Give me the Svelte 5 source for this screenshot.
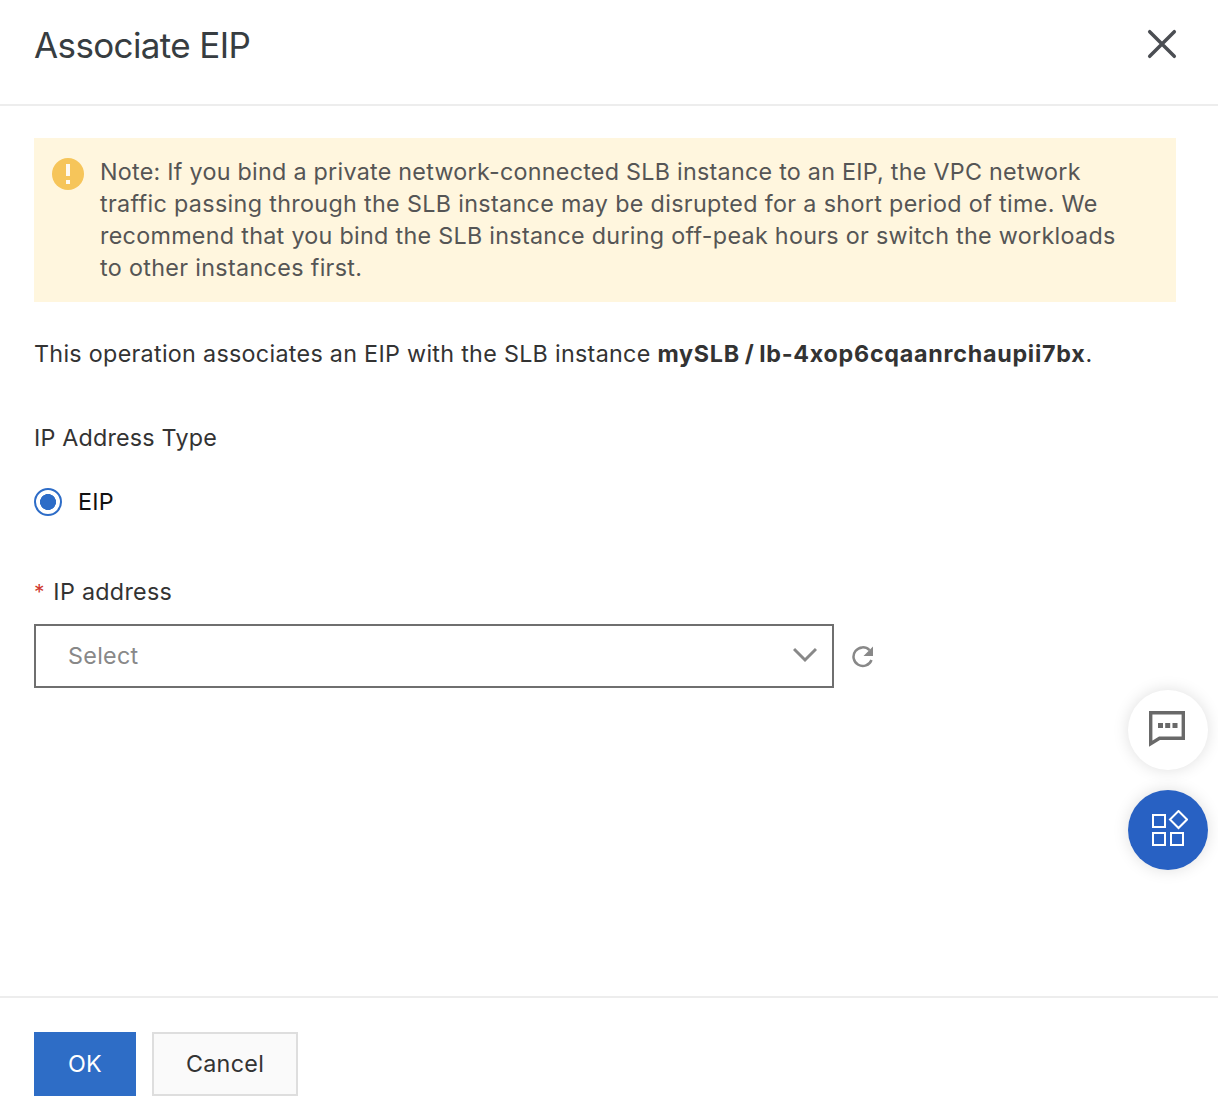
<script>
  let addressType = $state('eip');
</script>

<div class="panel">
  <header>
    <h1>Associate EIP</h1>
    <button class="close" aria-label="Close">
      <svg width="30" height="30" viewBox="0 0 30 30"><path d="M2.700 2.700L27.300 27.300M27.300 2.700L2.700 27.300" /></svg>
    </button>
  </header>

  <main>
    <div class="notice">
      <svg width="32" height="32" viewBox="0 0 32 32">
        <circle cx="16" cy="16" r="16" fill="#f6c55a" />
        <path d="M14 6h4v12h-4zM14 22h4v4h-4z" fill="#fffaf0" />
      </svg>
      <p>
        <span class="tight">Note: If you bind a private network-connected SLB instance to an EIP, the VPC network</span><br />
        <span class="loose">traffic passing through the SLB instance may be disrupted for a short period of time. We</span><br />
        recommend that you bind the SLB instance during off-peak hours or switch the workloads<br />
        <span class="loose">to other instances first.</span>
      </p>
    </div>

    <p class="summary">
      This operation associates an EIP with the SLB instance <strong>mySLB / lb-4xop6cqaanrchaupii7bx</strong>.
    </p>

    <div class="label type-label">IP Address Type</div>
    <label class="radio">
      <input type="radio" name="type" value="eip" bind:group={addressType} />
      <span>EIP</span>
    </label>

    <div class="label address-label"><i>*</i>IP address</div>
    <div class="field">
      <button class="select">
        <span>Select</span>
        <svg width="24" height="18" viewBox="0 0 24 18"><path d="M1 2L12 13L23 2" /></svg>
      </button>
      <button class="refresh" aria-label="Refresh">
        <svg width="24" height="24" viewBox="0 0 24 24">
          <path d="M18.500 6.200A9.300 9.300 0 1 0 20.500 16" fill="none" stroke="#888" stroke-width="2.500" />
          <path d="M22 2.500V12H12.500z" fill="#888" />
        </svg>
      </button>
    </div>
  </main>

  <footer>
    <button class="ok">OK</button>
    <button class="cancel">Cancel</button>
  </footer>

  <aside>
    <button class="round chat" aria-label="Feedback">
      <svg width="40" height="40" viewBox="0 0 40 40">
        <path d="M2.700 2.700H35.300V28.300H11.500L2.700 33.700Z" fill="none" stroke="#696969" stroke-width="3.400" />
        <path d="M10 13h5v5h-5zM17.200 13h5v5h-5zM24.500 13h5v5h-5z" fill="#696969" />
      </svg>
    </button>
    <button class="round apps" aria-label="Applications">
      <svg width="40" height="40" viewBox="0 0 40 40" fill="none" stroke="#fff" stroke-width="2">
        <path d="M5 5h12v12H5zM5 23h12v12H5zM23 23h12v12H23zM30.500 1L39 9.500L30.500 18L22 9.500Z" />
      </svg>
    </button>
  </aside>
</div>

<style>
  :global(body) { margin: 0; background: #fff; }
  .panel { position: relative; height: 1114px; display: flex; flex-direction: column; font: 23.300px/32px Inter, sans-serif; letter-spacing: 0.3px; color: #333; box-sizing: border-box; }
  button { font: inherit; letter-spacing: inherit; padding: 0; border: 0; background: none; }
  svg { display: block; flex: none; }
  header { flex: none; height: 80px; border-bottom: 2px solid #ededed; padding: 24px 41px 0 34px; display: flex; justify-content: space-between; align-items: flex-start; }
  h1 { margin: 0; font-size: 35px; line-height: 43px; font-weight: 400; letter-spacing: -0.62px; color: #373d41; }
  .close { margin-top: 5px; }
  .close path { stroke: #4b4e53; stroke-width: 3.500; stroke-linecap: round; }
  main { flex: 1; padding: 32px 42px 0 34px; }
  .notice { height: 164px; box-sizing: border-box; background: #fff6de; padding: 18px; display: flex; gap: 16px; color: #555; white-space: nowrap; }
  .notice svg { margin-top: 2px; }
  .tight { letter-spacing: 0.265px; }
  .loose { letter-spacing: 0.340px; }
  p { margin: 0; }
  .summary { margin-top: 36px; white-space: nowrap; }
  strong { font-weight: 700; letter-spacing: 0.74px; word-spacing: -1.500px; }
  .label { height: 32px; }
  .type-label { margin-top: 52px; letter-spacing: 0.2px; }
  .radio { display: flex; gap: 16px; align-items: center; margin-top: 32px; color: #111; }
  input { appearance: none; margin: 0; width: 28px; height: 28px; border: 2px solid #2d6cc7; border-radius: 50%; background: radial-gradient(circle, #2d6cc7 7.700px, #fff 8.300px); }
  .address-label { margin-top: 58px; }
  i { color: #d0392f; font-style: normal; font-size: 21px; line-height: 20px; margin-right: 8.500px; }
  .field { display: flex; align-items: center; gap: 17px; margin-top: 16px; }
  .select { width: 800px; height: 64px; border: 2px solid #6f6f6f; padding: 0 15.500px 0 32px; display: flex; align-items: center; justify-content: space-between; color: #888; }
  .select path { fill: none; stroke: #888; stroke-width: 3; }
  footer { height: 82px; border-top: 2px solid #ededed; padding-top: 34px; padding-left: 34px; display: flex; gap: 16px; }
  footer button { height: 64px; box-sizing: border-box; }
  .ok { width: 102px; background: #2e6dc6; color: #fff; }
  .cancel { width: 146px; border: 2px solid #dedede; background: #fafafa; color: #333; }
  aside { position: absolute; right: 10px; top: 690px; display: flex; flex-direction: column; gap: 20px; }
  .round { width: 80px; height: 80px; border-radius: 50%; display: grid; place-items: center; box-shadow: 0 0 16px rgba(0, 0, 0, 0.13); }
  .chat { background: #fff; }
  .apps { background: #2861c3; }
</style>
